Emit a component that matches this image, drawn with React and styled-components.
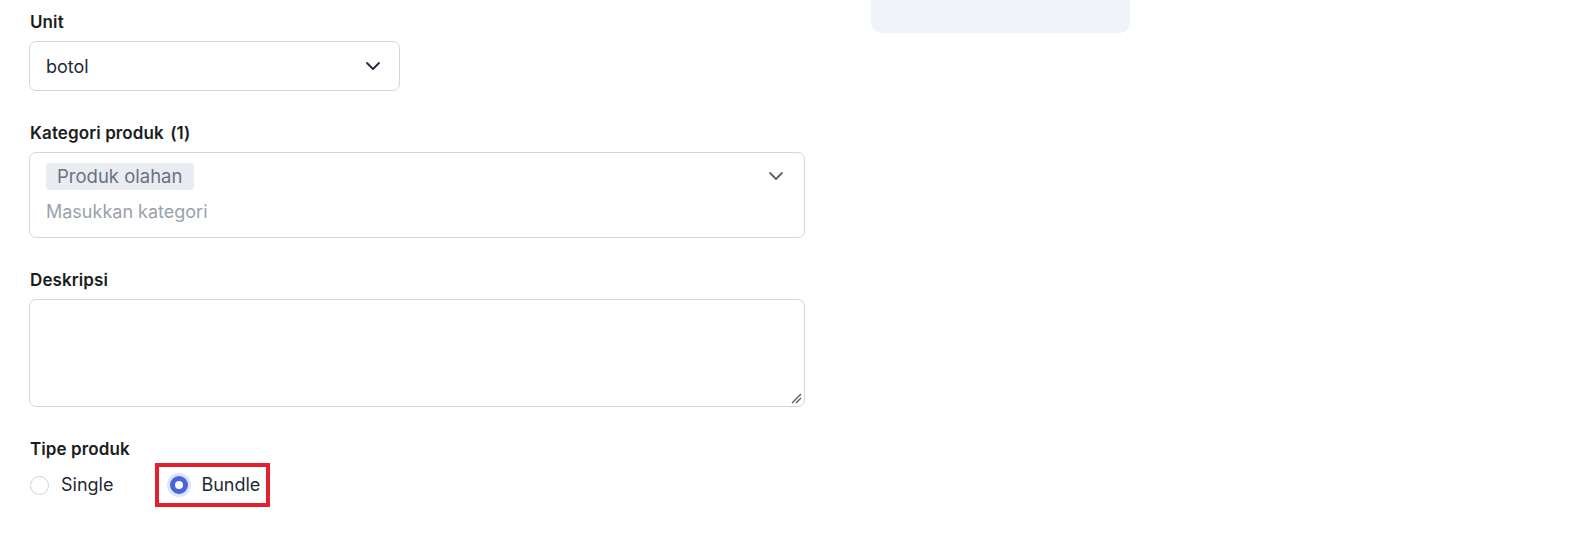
import React from "react";
import styled, { createGlobalStyle } from "styled-components";

const Global = createGlobalStyle`
  html, body { margin: 0; padding: 0; background: #ffffff; }
  body { font-family: Inter, "Noto Sans", sans-serif; color: #1f2328; }
  * { box-sizing: border-box; }
`;

const Page = styled.div`
  display: flex;
  align-items: flex-start;
  width: 1587px;
  height: 542px;
  overflow: hidden;
`;

const Form = styled.div`
  width: 805px;
  padding: 10px 0 0 29px;
  display: flex;
  flex-direction: column;
  gap: 30px;
`;

const SideCard = styled.div`
  margin-left: 66px;
  width: 259px;
  height: 33px;
  background: #f0f3f8;
  border-radius: 0 0 10px 10px;
`;

const Field = styled.div`
  display: flex;
  flex-direction: column;
  gap: 7px;
  width: ${(p) => p.$width || "100%"};
`;

const Label = styled.label`
  font-size: 17px;
  line-height: 24px;
  font-weight: 600;
  color: #1a1d21;
  padding-left: 1px;
  letter-spacing: 0.1px;
`;

const Count = styled.span`
  margin-left: 2px;
`;

const SelectBox = styled.div`
  height: 50px;
  border: 1px solid #d3d6dc;
  border-radius: 7px;
  display: flex;
  align-items: center;
  justify-content: space-between;
  padding: 0 14px 0 16px;
  font-size: 18px;
  color: #1f2937;
`;

const MultiBox = styled.div`
  height: 86px;
  border: 1px solid #d3d6dc;
  border-radius: 7px;
  display: flex;
  align-items: flex-start;
  justify-content: space-between;
  padding: 10px 16px 0 16px;
`;

const MultiInner = styled.div`
  display: flex;
  flex-direction: column;
  gap: 10px;
`;

const Chip = styled.span`
  align-self: flex-start;
  background: #e9edf1;
  color: #6b7280;
  font-size: 18.5px;
  line-height: 27px;
  padding: 0 12px 0 11px;
  border-radius: 4px;
`;

const Placeholder = styled.span`
  color: #9aa1ab;
  font-size: 18px;
  line-height: 24px;
`;

const ChevronWrap = styled.span`
  display: flex;
  color: ${(p) => p.$color || "#374151"};
  margin-top: ${(p) => p.$mt || "0px"};
`;

const TextArea = styled.div`
  position: relative;
  height: 108px;
  border: 1px solid #d3d6dc;
  border-radius: 7px;
`;

const Grip = styled.svg`
  position: absolute;
  right: 2px;
  bottom: 2px;
`;

const RadioRow = styled.div`
  display: flex;
  align-items: center;
  gap: 52px;
  margin-top: 5px;
  height: 24px;
`;

const RadioItem = styled.label`
  display: flex;
  align-items: center;
  gap: ${(p) => (p.$checked ? "10px" : "12px")};
  font-size: 18px;
  line-height: 24px;
  color: #1f2937;
  padding-left: ${(p) => (p.$highlight ? "2px" : "1px")};
  outline: ${(p) => (p.$highlight ? "4px solid #e5202e" : "none")};
  outline-offset: 6px;
`;

const RadioCircle = styled.span`
  flex: none;
  width: ${(p) => (p.$checked ? "24px" : "19px")};
  height: ${(p) => (p.$checked ? "24px" : "19px")};
  border-radius: 50%;
  display: flex;
  align-items: center;
  justify-content: center;
  ${(p) =>
    p.$checked
      ? `background: #dde5fb;`
      : `border: 1.5px solid #cfd3da; background: #fff;`}
`;

const RadioDot = styled.span`
  width: 18px;
  height: 18px;
  border-radius: 50%;
  border: 5px solid #4a63d9;
  background: #fff;
`;

const Chevron = ({ size = 24, sw = 1.8 }) => (
  <svg width={size} height={size} viewBox="0 0 24 24" fill="none" stroke="currentColor" strokeWidth={sw} strokeLinecap="round" strokeLinejoin="round">
    <path d="M6 9l6 6 6-6" />
  </svg>
);

export default function App() {
  return (
    <>
      <Global />
      <Page>
        <Form>
          <Field $width="371px">
            <Label>Unit</Label>
            <SelectBox>
              <span>botol</span>
              <ChevronWrap $color="#1f2937">
                <Chevron />
              </ChevronWrap>
            </SelectBox>
          </Field>
          <Field>
            <Label>
              Kategori produk <Count>(1)</Count>
            </Label>
            <MultiBox>
              <MultiInner>
                <Chip>Produk olahan</Chip>
                <Placeholder>Masukkan kategori</Placeholder>
              </MultiInner>
              <ChevronWrap $color="#5b6470" $mt="1px">
                <Chevron />
              </ChevronWrap>
            </MultiBox>
          </Field>
          <Field>
            <Label>Deskripsi</Label>
            <TextArea>
              <Grip width="13" height="13" viewBox="0 0 13 13">
                <path d="M12 3L3 12M12 7L7 12" stroke="#555" strokeWidth="1.2" />
              </Grip>
            </TextArea>
          </Field>
          <Field>
            <Label>Tipe produk</Label>
            <RadioRow>
              <RadioItem>
                <RadioCircle />
                Single
              </RadioItem>
              <RadioItem $checked $highlight>
                <RadioCircle $checked>
                  <RadioDot />
                </RadioCircle>
                Bundle
              </RadioItem>
            </RadioRow>
          </Field>
        </Form>
        <SideCard />
      </Page>
    </>
  );
}
